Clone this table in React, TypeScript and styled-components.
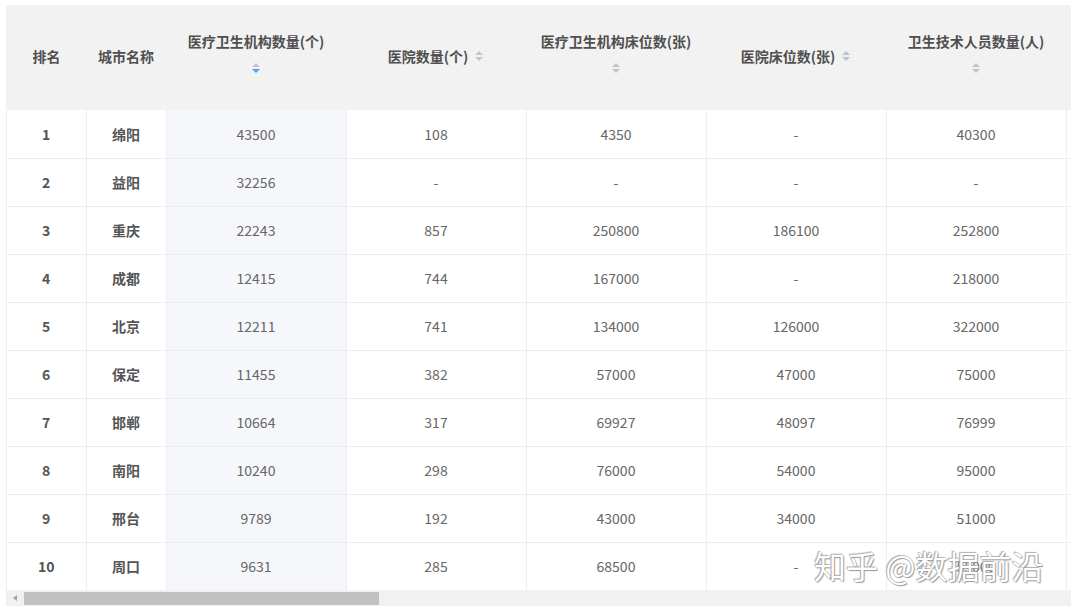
import { styled, createGlobalStyle } from "styled-components"

const GlobalStyle = createGlobalStyle`
  html, body {
    margin: 0;
    padding: 0;
    background: #ffffff;
    overflow: hidden;
  }
  body {
    font-family: "Noto Sans CJK SC", "Noto Sans", sans-serif;
  }
`

const headings = [
  { key: "rank", title: "排名", width: 79, sortable: false },
  { key: "city", title: "城市名称", width: 80, sortable: false },
  { key: "inst", title: "医疗卫生机构数量(个)", width: 180, sortable: true, stacked: true, active: true },
  { key: "hosp", title: "医院数量(个)", width: 180, sortable: true },
  { key: "instBeds", title: "医疗卫生机构床位数(张)", width: 180, sortable: true, stacked: true },
  { key: "hospBeds", title: "医院床位数(张)", width: 180, sortable: true },
  { key: "staff", title: "卫生技术人员数量(人)", width: 180, sortable: true, stacked: true },
  { key: "doctors", title: "执业(助理)医师数量(人)", width: 180, sortable: true, stacked: true },
]

const data = [
  ["1", "绵阳", "43500", "108", "4350", "-", "40300", "14800"],
  ["2", "益阳", "32256", "-", "-", "-", "-", "-"],
  ["3", "重庆", "22243", "857", "250800", "186100", "252800", "96800"],
  ["4", "成都", "12415", "744", "167000", "-", "218000", "82000"],
  ["5", "北京", "12211", "741", "134000", "126000", "322000", "125000"],
  ["6", "保定", "11455", "382", "57000", "47000", "75000", "33000"],
  ["7", "邯郸", "10664", "317", "69927", "48097", "76999", "32000"],
  ["8", "南阳", "10240", "298", "76000", "54000", "95000", "38000"],
  ["9", "邢台", "9789", "192", "43000", "34000", "51000", "23000"],
  ["10", "周口", "9631", "285", "68500", "-", "55000", "26000"],
]

const SortIcon = ({ active }: { active?: boolean }) => (
  <StyledSort>
    <svg width="10" height="12" viewBox="0 0 10 12">
      <path d="M1 5 L5 1 L9 5 Z" fill="#c0c4cc" />
      <path d="M1 7 L5 11 L9 7 Z" fill={ active ? "#4a9ff5" : "#c0c4cc" } />
    </svg>
  </StyledSort>
)

const App = () => {
  return (
    <>
      <GlobalStyle />
      <StyledPage>
        <StyledContainer>
          <StyledTable>
            <colgroup>
              {
                headings.map(({ key, width }) => (
                  <col key={ key } style={ { width } } />
                ))
              }
            </colgroup>
            <StyledThead>
              <tr>
                {
                  headings.map(({ key, title, sortable, stacked, active }) => (
                    <StyledTh key={ key }>
                      <StyledHeadInner $stacked={ !!stacked }>
                        <span>{ title }</span>
                        { sortable && <SortIcon active={ active } /> }
                      </StyledHeadInner>
                    </StyledTh>
                  ))
                }
              </tr>
            </StyledThead>
            <StyledTbody>
              {
                data.map(row => (
                  <tr key={ row[0] }>
                    {
                      row.map((value, i) => (
                        <StyledTd
                          key={ headings[i].key }
                          $bold={ i < 2 }
                          $sorted={ !!headings[i].active }
                        >
                          { value }
                        </StyledTd>
                      ))
                    }
                  </tr>
                ))
              }
            </StyledTbody>
          </StyledTable>
          <StyledScrollbar>
            <StyledArrow />
            <StyledThumb />
          </StyledScrollbar>
          <StyledWatermark>知乎 @数据前沿</StyledWatermark>
        </StyledContainer>
      </StyledPage>
    </>
  )
}

const StyledPage = styled("div")`
  padding: 5px 0 0 6px;
`

const StyledContainer = styled("div")`
  position: relative;
  width: 1239px;
  overflow: hidden;
  border-left: 1px solid #ebeef5;
`

const StyledTable = styled("table")`
  table-layout: fixed;
  width: 1239px;
  border-collapse: collapse;
  border-spacing: 0;
`

const StyledThead = styled("thead")`
  background-color: #f2f2f2;
`

const StyledTh = styled("th")`
  height: 105px;
  padding: 0 10px;
  font-size: 14px;
  font-weight: bold;
  color: #4f4f4f;
  text-align: center;
  vertical-align: middle;
  box-sizing: border-box;
`

const StyledHeadInner = styled("div")<{ $stacked: boolean }>`
  display: flex;
  flex-direction: ${ ({ $stacked }) => $stacked ? "column" : "row" };
  align-items: center;
  justify-content: center;
  gap: ${ ({ $stacked }) => $stacked ? "11px" : "6px" };
  line-height: 20px;
  white-space: nowrap;
  margin-top: ${ ({ $stacked }) => $stacked ? "-10px" : "-4px" };
`

const StyledSort = styled("span")`
  display: inline-flex;
  width: 10px;
  height: 12px;
  svg {
    display: block;
  }
`

const StyledTbody = styled("tbody")`
  background-color: #ffffff;
  tr:last-child td {
    border-bottom: 0;
  }
`

const StyledTd = styled("td")<{ $bold: boolean; $sorted: boolean }>`
  height: 48px;
  padding: 0 10px;
  box-sizing: border-box;
  text-align: center;
  font-size: 14px;
  color: ${ ({ $bold }) => $bold ? "#555555" : "#666666" };
  font-weight: ${ ({ $bold }) => $bold ? "bold" : "normal" };
  background-color: ${ ({ $sorted }) => $sorted ? "#f5f7fa" : "transparent" };
  border-bottom: 1px solid #ebeef5;
  border-right: 1px solid #ebeef5;
`

const StyledScrollbar = styled("div")`
  height: 16px;
  background-color: #f1f1f1;
  display: flex;
  align-items: center;
  padding: 0 0 0 17px;
  position: relative;
`

const StyledArrow = styled("span")`
  position: absolute;
  left: 6px;
  top: 5px;
  width: 0;
  height: 0;
  border-top: 3px solid transparent;
  border-bottom: 3px solid transparent;
  border-right: 4px solid #a3a3a3;
`

const StyledThumb = styled("div")`
  width: 355px;
  height: 13px;
  background-color: #c1c1c1;
`

const StyledWatermark = styled("div")`
  position: absolute;
  left: 807px;
  top: 540px;
  font-size: 32px;
  line-height: 40px;
  color: #ffffff;
  text-shadow: 0 0 1px #8c8c8c, 1px 1px 1px #9a9a9a, -1px -1px 1px #b5b5b5;
  white-space: nowrap;
  pointer-events: none;
`

export default App
